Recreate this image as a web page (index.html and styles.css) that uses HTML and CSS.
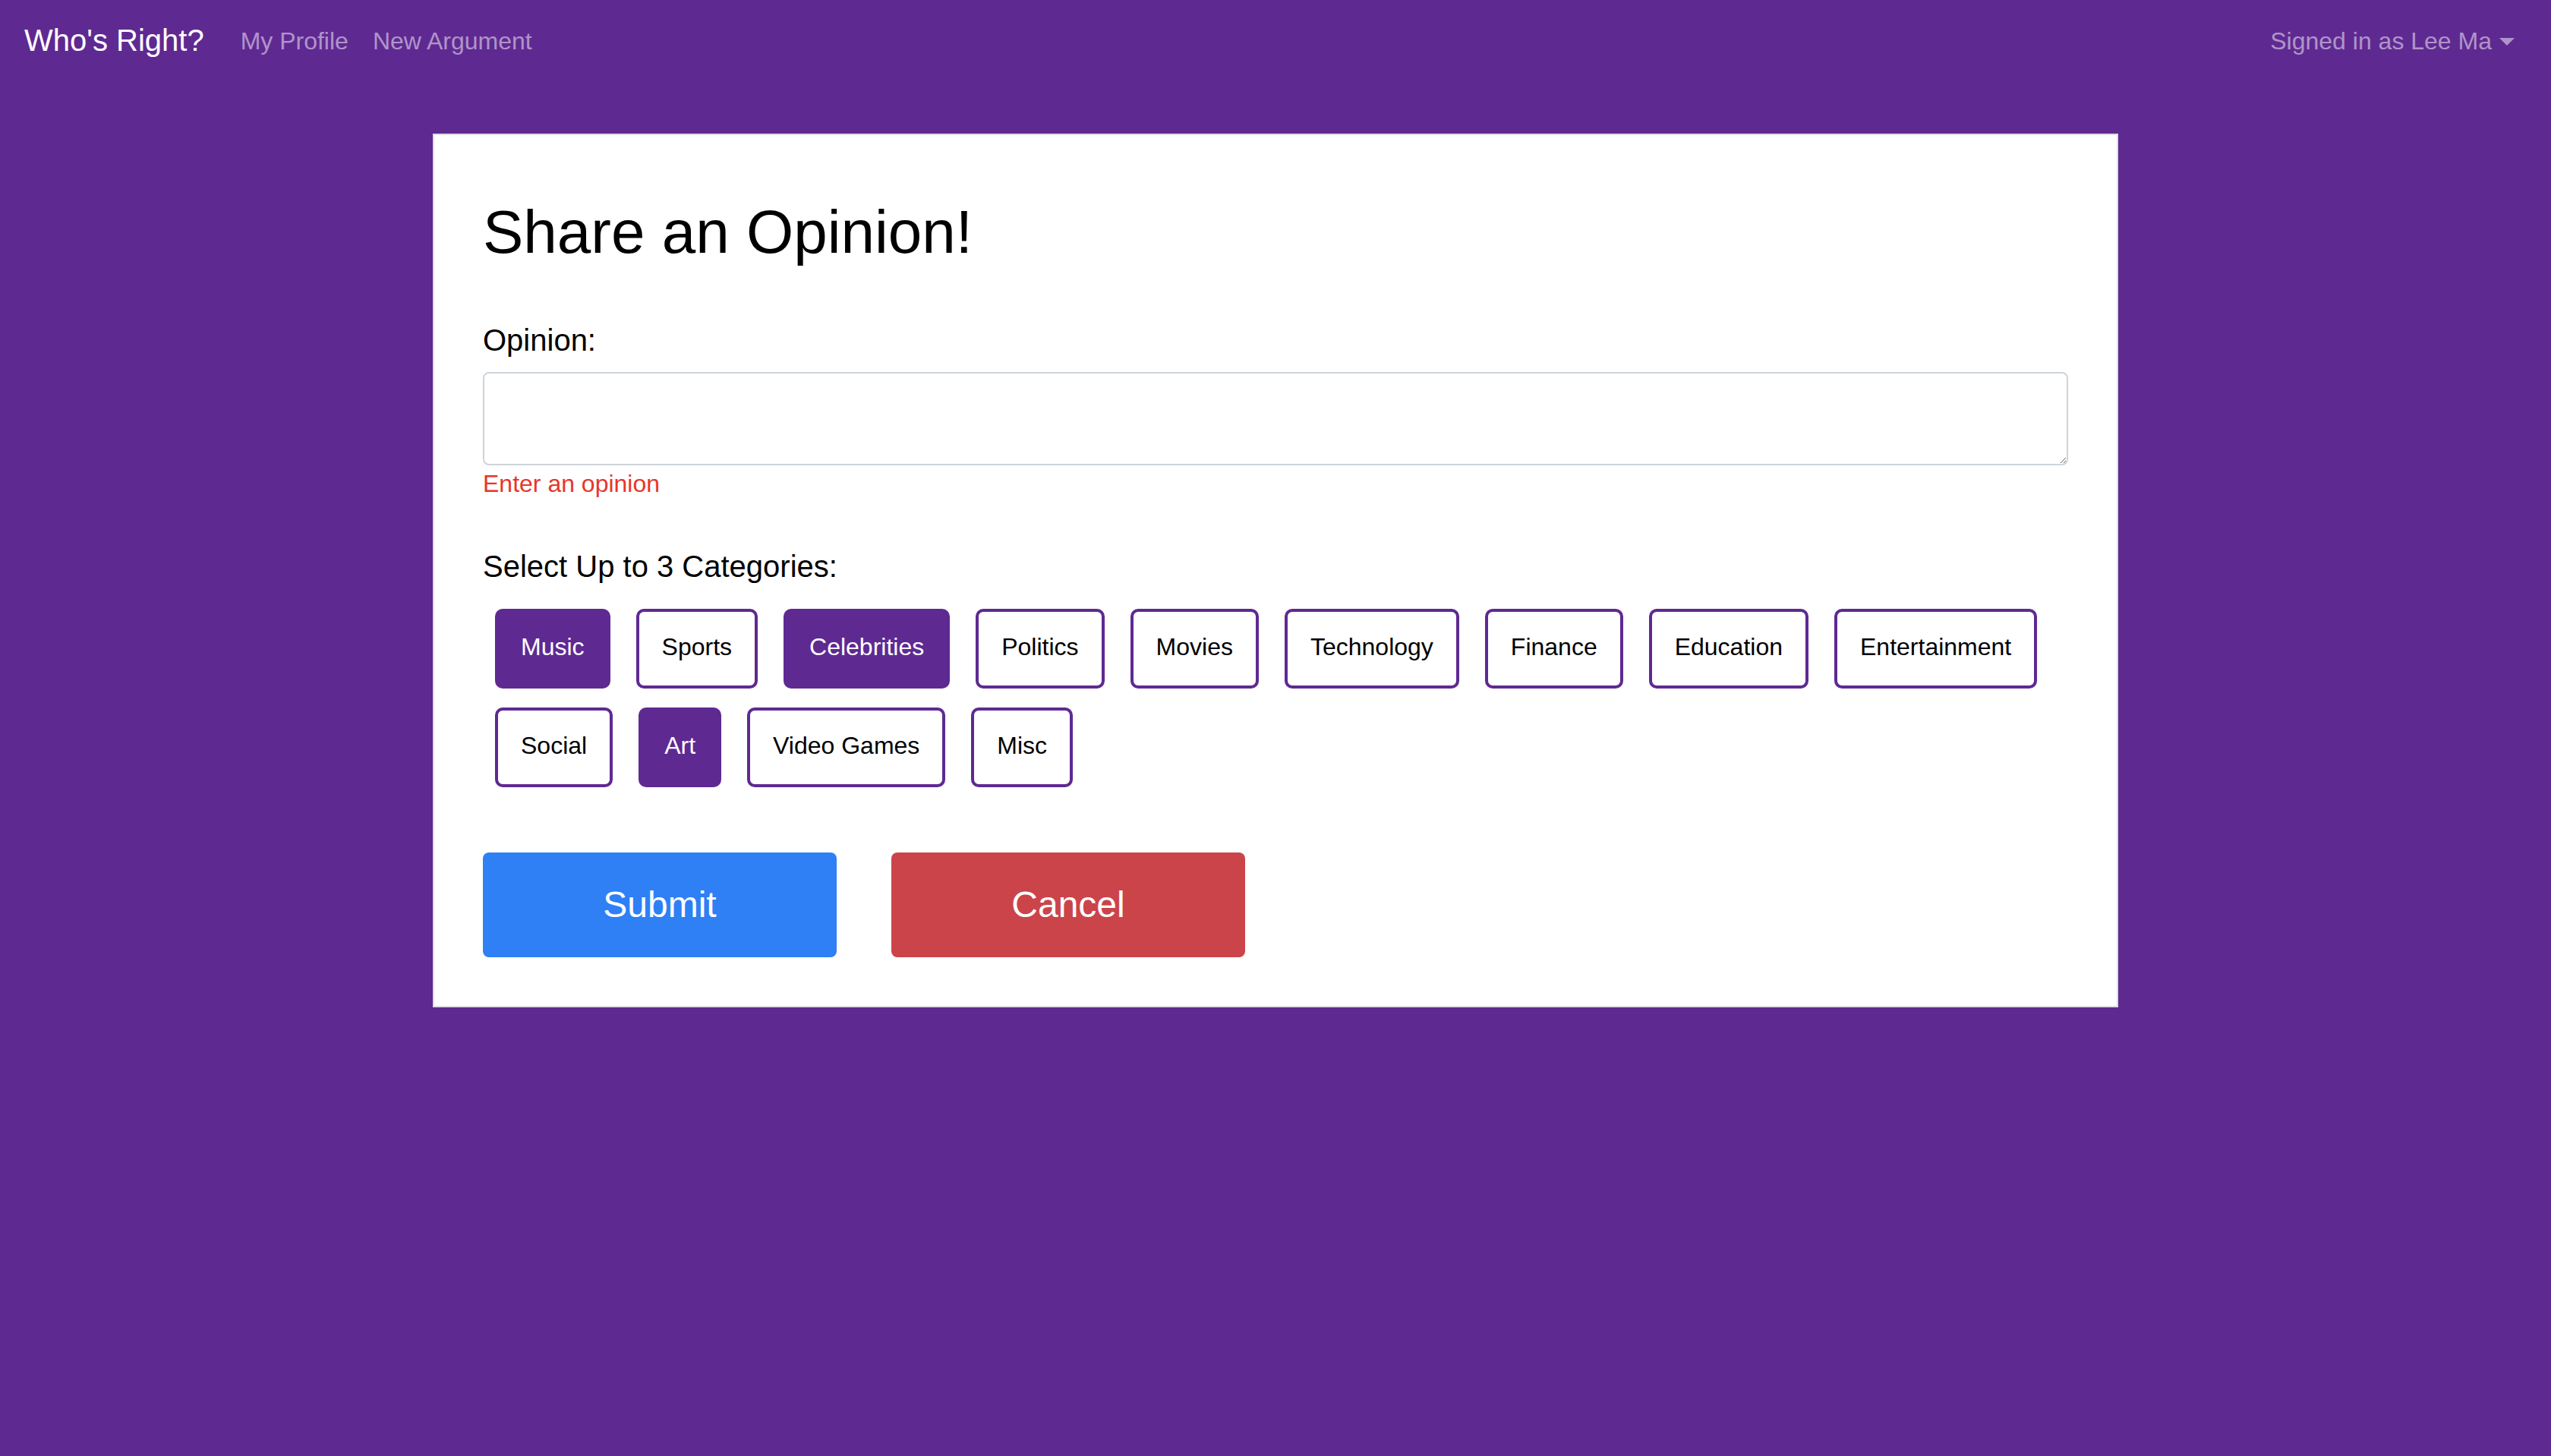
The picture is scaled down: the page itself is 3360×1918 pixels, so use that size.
FILE: index.html
```html
<!DOCTYPE html>
<html lang="en">
<head>
<meta charset="utf-8">
<title>Who's Right? - New Opinion</title>
<link rel="stylesheet" href="styles.css">
</head>
<body>
<nav class="navbar">
  <a class="brand" href="#">Who's Right?</a>
  <ul class="nav-links">
    <li><a class="nav-link" href="#">My Profile</a></li>
    <li><a class="nav-link" href="#">New Argument</a></li>
  </ul>
  <div class="nav-right">
    <a class="nav-link dropdown-toggle" href="#">Signed in as Lee Ma</a>
  </div>
</nav>

<main class="page">
  <section class="card">
    <h1 class="title">Share an Opinion!</h1>
    <form class="form">
      <label class="field-label" for="opinion">Opinion:</label>
      <textarea id="opinion" class="textarea"></textarea>
      <div class="error">Enter an opinion</div>

      <div class="field-label categories-label">Select Up to 3 Categories:</div>
      <div class="chips">
        <button type="button" class="chip active">Music</button>
        <button type="button" class="chip">Sports</button>
        <button type="button" class="chip active">Celebrities</button>
        <button type="button" class="chip">Politics</button>
        <button type="button" class="chip">Movies</button>
        <button type="button" class="chip">Technology</button>
        <button type="button" class="chip">Finance</button>
        <button type="button" class="chip">Education</button>
        <button type="button" class="chip">Entertainment</button>
        <button type="button" class="chip">Social</button>
        <button type="button" class="chip active">Art</button>
        <button type="button" class="chip">Video Games</button>
        <button type="button" class="chip">Misc</button>
      </div>

      <div class="actions">
        <button type="submit" class="btn btn-submit">Submit</button>
        <button type="button" class="btn btn-cancel">Cancel</button>
      </div>
    </form>
  </section>
</main>
</body>
</html>
```

FILE: styles.css
```css
* {
  box-sizing: border-box;
}

html, body {
  margin: 0;
  padding: 0;
}

body {
  background: #5f2992;
  min-height: 100vh;
  font-family: "Liberation Sans", Arial, Helvetica, sans-serif;
  color: #000;
}

/* Navbar */
.navbar {
  display: flex;
  align-items: center;
  height: 112px;
  padding: 0 32px;
}

.brand {
  font-size: 40px;
  line-height: 60px;
  padding-bottom: 6px;
  color: #fff;
  text-decoration: none;
  margin-right: 32px;
  white-space: nowrap;
}

.nav-links {
  display: flex;
  list-style: none;
  margin: 0;
  padding: 0;
}

.nav-link {
  display: block;
  font-size: 32px;
  line-height: 48px;
  padding: 0 16px 4px;
  color: rgba(255, 255, 255, 0.5);
  text-decoration: none;
  white-space: nowrap;
}

.nav-right {
  margin-left: auto;
}

.dropdown-toggle {
  display: flex;
  align-items: center;
}

.dropdown-toggle::after {
  content: "";
  display: inline-block;
  margin-left: 10px;
  margin-top: 2px;
  border-top: 10px solid currentColor;
  border-left: 10px solid transparent;
  border-right: 10px solid transparent;
}

/* Card */
.page {
  padding-top: 64px;
  display: flex;
  justify-content: center;
}

.card {
  width: 2220px;
  background: #fff;
  border: 2px solid #dfdfdf;
  padding: 64px;
}

.title {
  font-size: 80px;
  line-height: 96px;
  font-weight: 400;
  margin: 16px 0 0;
}

.form {
  display: flex;
  flex-direction: column;
}

.field-label {
  display: block;
  font-size: 40px;
  line-height: 60px;
  margin-top: 64px;
}

.textarea {
  display: block;
  width: 100%;
  height: 123px;
  margin-top: 12px;
  border: 2px solid #ced4da;
  border-radius: 8px;
  font-family: inherit;
  font-size: 32px;
  padding: 12px 24px;
  resize: both;
}

.error {
  font-size: 32px;
  line-height: 48px;
  color: #e8352a;
}

.categories-label {
  margin-top: 55px;
}

.chips {
  display: flex;
  flex-wrap: wrap;
  column-gap: 34px;
  row-gap: 25px;
  padding-left: 16px;
  margin-top: 26px;
}

.chip {
  font-family: inherit;
  font-size: 32px;
  line-height: 48px;
  padding: 22px 30px 27px;
  border: 4px solid #5f2992;
  border-radius: 10px;
  background: #fff;
  color: #000;
  cursor: pointer;
}

.chip.active {
  background: #5f2992;
  color: #fff;
}

.actions {
  display: flex;
  gap: 72px;
  margin-top: 86px;
}

.btn {
  width: 466px;
  height: 138px;
  border: none;
  border-radius: 8px;
  font-family: inherit;
  font-size: 48px;
  line-height: 72px;
  color: #fff;
  cursor: pointer;
}

.btn-submit {
  background: #2f7ff5;
}

.btn-cancel {
  background: #cb444a;
}
```
